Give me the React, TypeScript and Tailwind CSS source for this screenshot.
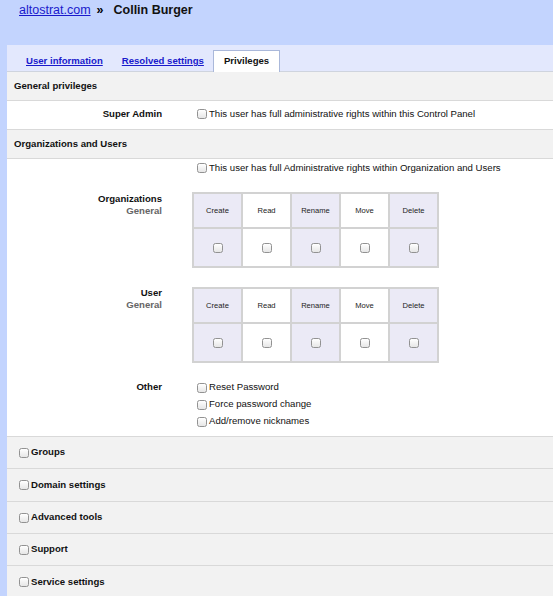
import React from "react"

const Box: React.FC<{ className?: string }> = ({ className = "" }) => (
  <span
    className={`inline-block w-[10px] h-[10px] shrink-0 rounded-[2.5px] border border-[#929292] bg-linear-to-b from-white to-[#e6e6e6] ${className}`}
  />
)

const actions = ["Create", "Read", "Rename", "Move", "Delete"]

const PermTable: React.FC = () => (
  <div className="grid grid-cols-[repeat(5,47px)] grid-rows-[33px_37px] gap-[2px] p-[2px] bg-[#d2d2d2] w-fit">
    {actions.map((a, i) => (
      <div
        key={a}
        className={`flex items-center justify-center text-[7.6px] text-[#222] ${i % 2 === 0 ? "bg-[#ebeaf6]" : "bg-white"}`}
      >
        {a}
      </div>
    ))}
    {actions.map((a, i) => (
      <div
        key={a + "-cb"}
        className={`flex items-center justify-center ${i % 2 === 0 ? "bg-[#ebeaf6]" : "bg-white"}`}
      >
        <Box />
      </div>
    ))}
  </div>
)

const CheckLine: React.FC<{ label: string; className?: string }> = ({ label, className = "" }) => (
  <div className={`flex items-center gap-[2px] pl-[5px] text-[9.6px] text-[#111] ${className}`}>
    <Box />
    <span>{label}</span>
  </div>
)

const SectionHead: React.FC<{ title: string }> = ({ title }) => (
  <div className="h-[29px] flex items-center px-[7px] bg-[#f2f2f2] border-b border-[#d9d9d9] text-[9.6px] font-bold text-[#111]">
    {title}
  </div>
)

const collapsed = [
  { label: "Groups", h: "h-[32px]" },
  { label: "Domain settings", h: "h-[33px]" },
  { label: "Advanced tools", h: "h-[32px]" },
  { label: "Support", h: "h-[32px]" },
  { label: "Service settings", h: "h-[33px]" },
]

export default function App() {
  return (
    <div className="w-[553px] min-h-[596px] bg-[#c3d4fe] font-['Liberation_Sans',Arial,sans-serif] overflow-hidden">
      <div className="h-[45px] pl-[19px] pt-[2px] text-[12.5px] leading-[16px]">
        <a href="#" className="text-[#1a1acc] underline">
          altostrat.com
        </a>
        <span className="font-bold ml-[6px]">»</span>
        <span className="font-bold ml-[10px] text-[#111]">Collin Burger</span>
      </div>

      <div className="ml-[7px] bg-white">
        <div className="flex items-end h-[27px] pl-[9px] bg-[#e3e8fd] border-b border-[#cfd4de] text-[9.6px] font-bold">
          <a href="#" className="h-[21px] leading-[21px] px-[10px] text-[#1a1acc] underline">
            User information
          </a>
          <a href="#" className="h-[21px] leading-[21px] px-[9px] text-[#1a1acc] underline">
            Resolved settings
          </a>
          <div className="-mb-px h-[22px] leading-[20px] px-[10px] bg-white border border-b-0 border-[#aab8da] text-[#111]">
            Privileges
          </div>
        </div>

        <SectionHead title="General privileges" />
        <div className="h-[29px] flex items-center pb-[1px] border-b border-[#d9d9d9]">
          <div className="w-[155px] text-right text-[9.6px] font-bold text-[#111]">Super Admin</div>
          <div className="ml-[30px]">
            <CheckLine label="This user has full administrative rights within this Control Panel" />
          </div>
        </div>

        <SectionHead title="Organizations and Users" />
        <div className="pt-[2px] pb-[6px] border-b border-[#d9d9d9]">
          <div className="ml-[185px] h-[14px] flex items-center">
            <CheckLine label="This user has full Administrative rights within Organization and Users" />
          </div>

          <div className="flex mt-[17px]">
            <div className="w-[155px] text-right text-[9.6px] font-bold leading-[12px] pt-[1px]">
              <div className="text-[#111]">Organizations</div>
              <div className="text-[#666]">General</div>
            </div>
            <div className="ml-[30px]">
              <PermTable />
            </div>
          </div>

          <div className="flex mt-[19px]">
            <div className="w-[155px] text-right text-[9.6px] font-bold leading-[12px]">
              <div className="text-[#111]">User</div>
              <div className="text-[#666]">General</div>
            </div>
            <div className="ml-[30px]">
              <PermTable />
            </div>
          </div>

          <div className="flex mt-[16px]">
            <div className="w-[155px] text-right text-[9.6px] font-bold leading-[15px] text-[#111]">Other</div>
            <div className="ml-[30px]">
              <CheckLine label="Reset Password" className="h-[17px]" />
              <CheckLine label="Force password change" className="h-[17px]" />
              <CheckLine label="Add/remove nicknames" className="h-[17px]" />
            </div>
          </div>
        </div>

        {collapsed.map((c) => (
          <div
            key={c.label}
            className={`${c.h} flex items-center gap-[2px] pl-[12px] bg-[#f2f2f2] border-b border-[#d9d9d9] text-[9.6px] font-bold text-[#111]`}
          >
            <Box />
            <span>{c.label}</span>
          </div>
        ))}
      </div>
    </div>
  )
}
